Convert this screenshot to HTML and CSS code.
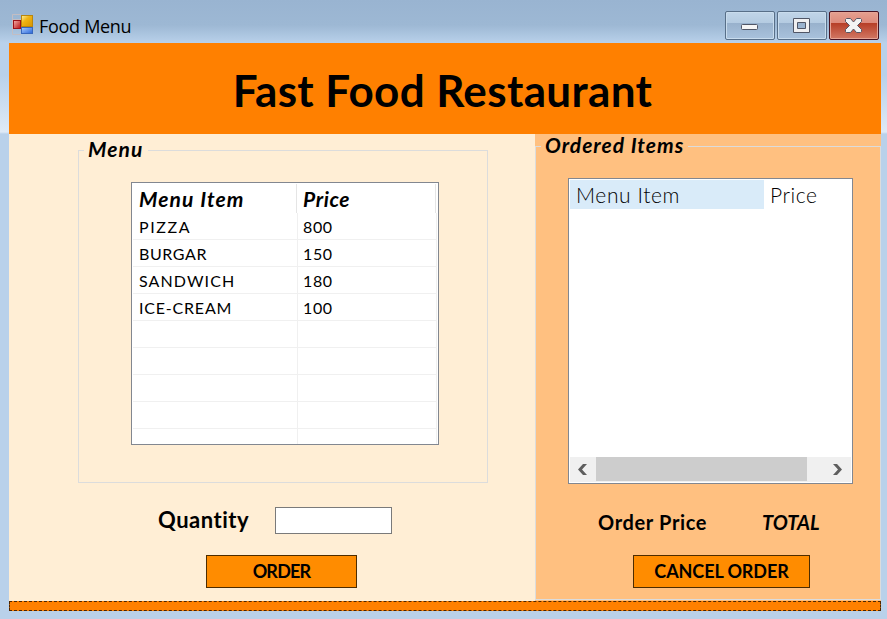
FILE: index.html
```html
<!DOCTYPE html>
<html lang="en">
<head>
<meta charset="utf-8">
<title>Food Menu</title>
<link rel="stylesheet" href="styles.css">
</head>
<body>
<div class="window">
  <header class="titlebar">
    <svg class="app-icon" width="22" height="22" viewBox="0 0 22 22">
      <defs>
        <linearGradient id="gold" x1="0" y1="0" x2="1" y2="1"><stop offset="0" stop-color="#fff3a0"/><stop offset=".4" stop-color="#f0b414"/><stop offset="1" stop-color="#d89400"/></linearGradient>
        <linearGradient id="red" x1="0" y1="0" x2="1" y2="1"><stop offset="0" stop-color="#f5b0a8"/><stop offset="1" stop-color="#b80f12"/></linearGradient>
        <linearGradient id="blue" x1="0" y1="0" x2="1" y2="1"><stop offset="0" stop-color="#a9ceff"/><stop offset="1" stop-color="#2864d8"/></linearGradient>
      </defs>
      <path d="M9 .5H.5V20.5H9M.5 5.500H9" fill="none" stroke="#c3bdc2"/>
      <rect x="1.500" y="6.500" width="7" height="8" fill="url(#red)" stroke="#9c1118"/>
      <rect x="9.500" y="1.500" width="11" height="11" fill="url(#gold)" stroke="#b9860d"/>
      <rect x="9.500" y="13.500" width="11" height="6" fill="url(#blue)" stroke="#3767bd"/>
    </svg>
    <span class="window-title">Food Menu</span>
    <div class="controls">
      <div class="control">
        <svg width="50" height="29" viewBox="0 0 50 29"><rect x="16.500" y="13.500" width="16" height="5" rx="1" fill="#f5f5f5" stroke="#505666"/></svg>
      </div>
      <div class="control">
        <svg width="50" height="29" viewBox="0 0 50 29"><path fill-rule="evenodd" d="M16.500 7.500h16v14h-16zM20.500 11.500v6h8v-6z" fill="#f0f0f1" stroke="#505666" stroke-linejoin="round"/></svg>
      </div>
      <div class="control close">
        <svg width="50" height="29" viewBox="0 0 50 29"><path d="M17.500 7.500h4l3 3.500 3-3.500h4l1 1v2l-4 4 4 4v2l-1 1h-4l-3-3.500-3 3.500h-4l-1-1v-2l4-4-4-4v-2z" fill="#f4f4f4" stroke="#565563"/></svg>
      </div>
    </div>
  </header>
  <main class="client">
    <div class="banner"><h1>Fast Food Restaurant</h1></div>
    <div class="panels">
      <section class="menu-panel">
        <div class="group menu-group">
          <div class="group-title"><span class="t-menu">Menu</span></div>
          <div class="menu-list">
            <div class="row head"><div><span class="t-mi">Menu Item</span></div><div><span class="t-pr">Price</span></div></div>
            <div class="row"><div class="i1">PIZZA</div><div>800</div></div>
            <div class="row"><div class="i2">BURGAR</div><div>150</div></div>
            <div class="row"><div class="i3">SANDWICH</div><div>180</div></div>
            <div class="row"><div class="i4">ICE-CREAM</div><div>100</div></div>
            <div class="row"><div></div><div></div></div>
            <div class="row"><div></div><div></div></div>
            <div class="row"><div></div><div></div></div>
            <div class="row"><div></div><div></div></div>
            <div class="row last"><div></div><div></div></div>
          </div>
        </div>
        <div class="quantity"><label for="qty">Quantity</label><input id="qty" type="text"></div>
        <button class="btn order">ORDER</button>
      </section>
      <section class="order-panel">
        <div class="group order-group">
          <div class="group-title"><span class="t-oi">Ordered Items</span></div>
          <div class="order-list">
            <div class="order-head"><div class="selected">Menu Item</div><div class="price">Price</div></div>
            <div class="scrollbar">
              <svg width="26" height="25" viewBox="0 0 26 25"><path d="M17 7h-4l-5 5.500 5 5.500h4l-5-5.500z" fill="#5e5e5e"/></svg>
              <div class="thumb"></div>
              <svg class="right" width="26" height="25" viewBox="0 0 26 25"><path d="M8 7h4l5 5.500-5 5.500H8l5-5.500z" fill="#5e5e5e"/></svg>
            </div>
          </div>
          <div class="total"><span class="t-op">Order Price</span><em>TOTAL</em></div>
          <button class="btn cancel">CANCEL ORDER</button>
        </div>
      </section>
    </div>
    <footer class="strip"></footer>
  </main>
</div>
</body>
</html>
```

FILE: styles.css
```css
* { box-sizing: border-box; }
body { margin: 0; font-family: Lato, "Liberation Sans", sans-serif; color: #000; }
.window {
  width: 887px; height: 619px; padding: 0 6px 8px 9px; overflow: hidden;
  background: linear-gradient(#99b4d1 0, #9db8d4 25px, #b9d1ea 43px, #b9d1ea 75px, #dfeaf6 132px, #b9d1ea 134px);
}
.titlebar { height: 43px; display: flex; align-items: flex-start; padding: 0 2px 0 3px; }
.app-icon { margin-top: 14px; }
.window-title { margin: 14px 0 0 5px; font: 18px/25px "Open Sans", sans-serif; letter-spacing: -.3px; }
.controls { display: flex; gap: 2px; margin: 11px 0 0 auto; }
.control {
  width: 50px; height: 29px; border: 1px solid #586f88; border-radius: 2px;
  box-shadow: inset 0 0 0 1px #c9dced;
  background: linear-gradient(#c1d5e8 0, #b4cbe1 11px, #98b1cc 11px, #a9c2dc 100%);
}
.control svg { display: block; margin: -1px; }
.close {
  border-color: #471322; box-shadow: inset 0 0 0 1px #e5a496;
  background: linear-gradient(#e5a090 0, #dd8a7b 11px, #b63d26 11px, #d27864 100%);
}
.client { width: 872px; height: 568px; }
.banner { height: 91px; background: #ff8000; display: flex; justify-content: center; }
h1 { margin: 20px 0 0 -5px; font-size: 44px; line-height: 54px; font-weight: 700; letter-spacing: .37px; white-space: nowrap; }
.panels { display: flex; height: 467px; }
.menu-panel { width: 526px; background: #ffeed5; padding: 16px 0 0 69px; }
.order-panel { width: 346px; background: #ffc080; padding-top: 12px; }
.group { border: 1px solid #dcdcdc; }
.group-title { display: flex; height: 24px; margin-top: -14px; padding: 2px 0 0 5px; font: italic 700 21px/20px Lato, sans-serif; white-space: nowrap; }
.group-title span { height: 20px; padding: 0 4px; }
.menu-group { width: 410px; height: 333px; }
.t-menu { background: #ffeed5; letter-spacing: 1.1px; }
.menu-list {
  width: 308px; height: 263px; margin: 21px 0 0 52px; padding: 1px 2px 1px 1px;
  border: 1px solid #828790; background: #fff; overflow: hidden;
}
.row { display: grid; grid-template-columns: 165px 139px; grid-template-rows: 27px; height: 27px; font-size: 16px; line-height: 28px; letter-spacing: .6px; }
.row > div { padding-left: 6px; border-right: 1px solid #f0f0f0; border-bottom: 1px solid #f0f0f0; white-space: nowrap; }
.row > div + div { padding-left: 5px; }
.i1 { letter-spacing: 1.6px; }
.i2 { letter-spacing: .6px; }
.i3 { letter-spacing: 1.1px; }
.i4 { letter-spacing: .8px; }
.row.head { grid-template-columns: 164px 139px; grid-template-rows: 29px; height: 29px; font: italic 700 21px/29px Lato, sans-serif; }
.row.head > div { border-bottom: 0; border-color: #e5e5e5; }
.row.head > div + div { padding-left: 6px; }
.row.last > div { border-bottom: 0; }
.t-mi { letter-spacing: 1.1px; }
.t-pr { letter-spacing: .6px; }
.quantity { display: flex; margin: 24px 0 0 80px; }
.quantity label { width: 117px; font-size: 22px; line-height: 25px; font-weight: 700; letter-spacing: .5px; }
.quantity input { width: 117px; height: 27px; border: 1px solid #7a7a7a; background: #fff; padding: 0 4px; }
.btn {
  display: block; height: 33px; padding: 0; border: 1px solid #4d2c00; border-radius: 0;
  background: #ff8c00; font: 700 18px/31px Lato, sans-serif; color: #000; letter-spacing: -.1px;
}
.order { width: 151px; margin: 21px 0 0 128px; letter-spacing: -.8px; }
.order-group { width: 346px; height: 454px; }
.t-oi { background: #ffc080; letter-spacing: 1px; }
.order-list {
  width: 285px; height: 306px; margin: 21px 0 0 32px; padding: 1px;
  border: 1px solid #828790; background: #fff; display: flex; flex-direction: column;
}
.order-head { display: flex; height: 29px; font-size: 21px; line-height: 29px; font-weight: 300; letter-spacing: .6px; }
.selected { width: 194px; padding-left: 6px; background: #d9ebf9; }
.price { padding-left: 6px; }
.scrollbar { display: flex; height: 25px; margin-top: auto; background: #f0f0f0; }
.thumb { width: 211px; height: 24px; background: #cdcdcd; }
.right { margin-left: auto; }
.total { display: flex; margin: 26px 0 0 62px; font-size: 20px; line-height: 24px; font-weight: 700; }
.t-op { width: 164px; letter-spacing: .65px; }
.cancel { width: 177px; margin: 21px 0 0 97px; }
.strip { height: 10px; background: #ff8000; border: 1px dashed #4d2600; }
```
